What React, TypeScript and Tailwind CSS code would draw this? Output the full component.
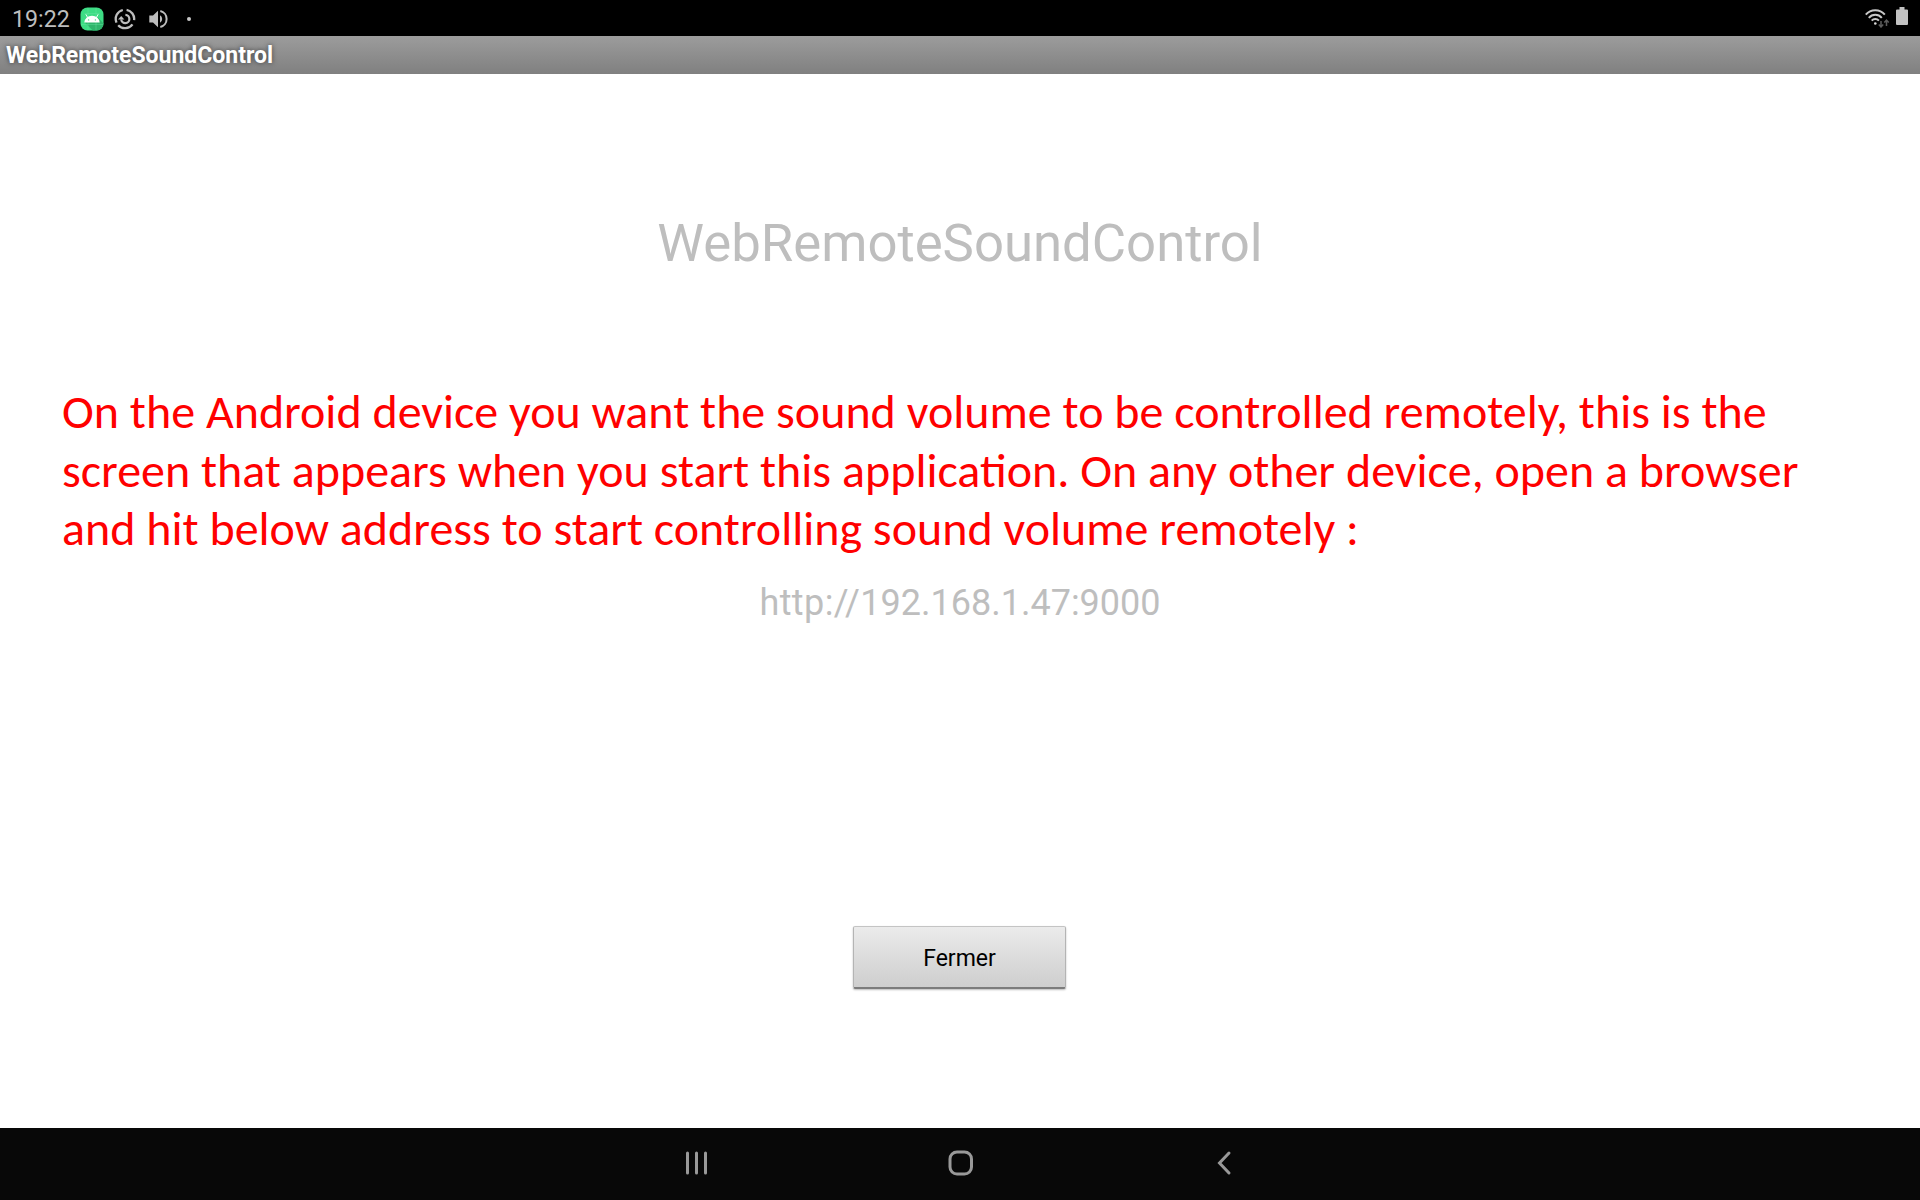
const instructions = [
  "On the Android device you want the sound volume to be controlled remotely, this is the",
  "screen that appears when you start this application. On any other device, open a browser",
  "and hit below address to start controlling sound volume remotely :",
];

function AndroidIcon() {
  return (
    <svg width="24" height="24" viewBox="0 0 24 24" className="shrink-0">
      <rect x="0.5" y="0.5" width="23" height="23" rx="7" fill="#3ddc84" />
      <path d="M4.5 15.2 12.8 23.5H17a6.5 6.5 0 0 0 6.500-6.500v-.5L17.500 10Z" fill="#2fb56c" />
      <path d="M4.500 6.500H19.500M8 1V23M16 1V23M1 17.500H23" stroke="#6be6a3" strokeWidth="0.4" fill="none" />
      <path d="M4.300 15.600a7.700 6.900 0 0 1 15.400 0Z" fill="#fff" />
      <path d="M7.600 10.500 6 7.600M16.400 10.500 18 7.600" stroke="#fff" strokeWidth="0.9" strokeLinecap="round" />
      <circle cx="8.600" cy="12.900" r="0.700" fill="#3ddc84" />
      <circle cx="15.400" cy="12.900" r="0.700" fill="#3ddc84" />
    </svg>
  );
}

function UpdateIcon() {
  return (
    <svg width="22" height="22" viewBox="0 0 22 22" fill="none" stroke="#bdbdbd" className="shrink-0">
      <path d="M12.600 1.900A9.200 9.200 0 0 1 20.100 12.200M18.500 16.300A9.200 9.200 0 0 1 4.200 17.200M2.500 14.600A9.200 9.200 0 0 1 8.800 2" strokeWidth="2.300" />
      <path d="M11.400 6.900A4.100 4.100 0 1 1 7.200 11.400" strokeWidth="2.200" />
      <path d="M4 11.600 7.200 7.900 10.400 11.600Z" fill="#bdbdbd" stroke="none" />
    </svg>
  );
}

function SpeakerIcon() {
  return (
    <svg width="19" height="20" viewBox="0 0 19 20" fill="none" className="shrink-0">
      <path d="M0.300 6.500H4L9 1.700V18.300L4 13.500H0.300Z" fill="#bdbdbd" />
      <path d="M11 6.200Q13.200 7.400 13.200 10T11 13.800Z" fill="#bdbdbd" />
      <path d="M11.300 2.100A8.100 8.100 0 0 1 11.300 17.900" stroke="#bdbdbd" strokeWidth="2" />
    </svg>
  );
}

function WifiIcon() {
  return (
    <svg width="26" height="20" viewBox="0 0 26 20" fill="none" className="shrink-0">
      <g stroke="#c8c8c8" strokeWidth="2">
        <path d="M1.800 6.600A12.400 12.400 0 0 1 20.800 6.600" />
        <path d="M4.800 9.800A8.500 8.500 0 0 1 17.800 9.800" />
        <path d="M7.700 12.700A4.800 4.800 0 0 1 14.900 12.700" />
      </g>
      <circle cx="11.300" cy="15.500" r="1.300" fill="#d8d8d8" />
      <g stroke="#5c5c5c" strokeWidth="1.500">
        <path d="M17 13V19M14.800 16.600 17 19 19.200 16.600" />
        <path d="M22.500 18V12M20.300 14.400 22.500 12 24.700 14.400" />
      </g>
    </svg>
  );
}

function StatusBar() {
  return (
    <header className="flex h-9 shrink-0 items-center bg-black">
      <span className="ml-3 w-[58px] pt-0.5 text-[23.200px] leading-9 text-[#bdbdbd]">19:22</span>
      <div className="mt-px ml-2.5 flex items-center">
        <AndroidIcon />
        <div className="ml-2.5"><UpdateIcon /></div>
        <div className="ml-[13px]"><SpeakerIcon /></div>
        <span className="ml-[19px] size-1 rounded-full bg-[#c8c8c8]" />
      </div>
      <div className="mr-3 ml-auto flex items-center">
        <WifiIcon />
        <svg width="12" height="18" viewBox="0 0 12 18" className="-mt-1 ml-1.5">
          <path d="M3.500 0H8.500V2.500H11Q12 2.500 12 3.500V17Q12 18 11 18H1Q0 18 0 17V3.500Q0 2.500 1 2.500H3.500Z" fill="#c2c2c2" />
        </svg>
      </div>
    </header>
  );
}

function NavigationBar() {
  return (
    <nav className="flex h-[72px] shrink-0 items-center justify-center bg-[#080808] pb-0.5">
      <svg width="24" height="28" viewBox="0 0 24 28" stroke="#999" strokeWidth="3" strokeLinecap="round">
        <path d="M3.500 4V24M12.500 4V24M21.500 4V24" />
      </svg>
      <svg width="28" height="28" viewBox="0 0 28 28" fill="none" stroke="#999" strokeWidth="3" className="mx-[238px]">
        <rect x="4" y="3" width="21.500" height="22" rx="7" />
      </svg>
      <svg width="24" height="28" viewBox="0 0 24 28" fill="none" stroke="#999" strokeWidth="3" strokeLinecap="round">
        <path d="M17 4 7.500 14 17 24" />
      </svg>
    </nav>
  );
}

export default function App() {
  return (
    <div className="flex h-[1200px] w-[1920px] flex-col overflow-hidden bg-white font-['Roboto',sans-serif]">
      <StatusBar />
      <div className="h-[38px] shrink-0 bg-linear-to-b from-[#9c9c9c] to-[#808080] pl-1.5 text-[23px] leading-[39px] font-bold text-white [text-shadow:0_0_5px_#0009]">
        WebRemoteSoundControl
      </div>
      <main className="flex grow flex-col items-center">
        <h1 className="mt-[138px] text-[52.700px] leading-[62px] text-[#bebebe]">WebRemoteSoundControl</h1>
        <div className="mt-[109px] w-full pl-[62px] font-['Calibri','Carlito','Lato',sans-serif] text-[48px] leading-[58.500px] whitespace-nowrap text-[#ff0000]">
          {instructions.map((line) => (
            <p key={line}>{line}</p>
          ))}
        </div>
        <p className="mt-[23px] text-[36px] leading-[42px] text-[#bebebe]">
          <span className="tracking-[0.4px]">http://</span>192.168.1.47:9000
        </p>
        <button className="mt-[302px] mr-0.5 h-[63px] w-[213px] rounded-xs border border-b-2 border-x-[#b4b4b4] border-t-[#c4c4c4] border-b-[#7c7c7c] bg-linear-to-b from-[#ebebeb] to-[#cecece] pt-1 pl-[7px] pr-1.5 text-[23px] leading-none text-black shadow-[0_1px_2px_#0004]">
          Fermer
        </button>
      </main>
      <NavigationBar />
    </div>
  );
}
